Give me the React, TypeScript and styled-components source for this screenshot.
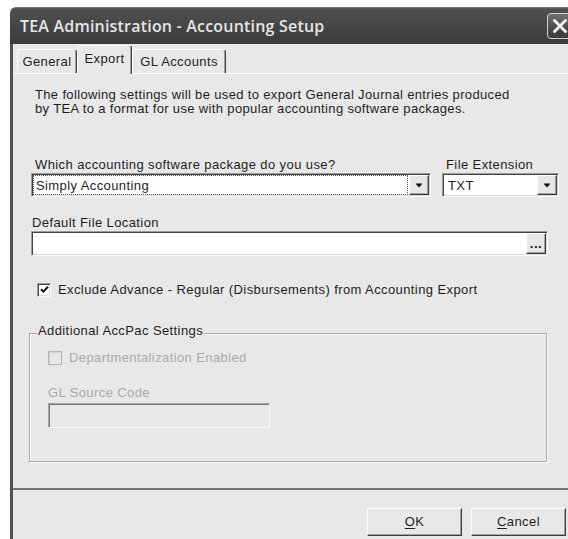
import React from 'react';
import styled, { createGlobalStyle, css } from 'styled-components';

const ui = `"Liberation Sans", Arial, sans-serif`;
const face = '#e8e8e8';
const ink = '#1e1e1e';
const grayInk = '#a9a9a9';

const GlobalStyle = createGlobalStyle`
  html, body {
    margin: 0;
    padding: 0;
    background: #ffffff;
    overflow: hidden;
  }
  body {
    width: 568px;
    height: 539px;
    font-family: ${ui};
  }
  *, *::before, *::after {
    box-sizing: border-box;
  }
`;

const sunken = css`
  border: 1px solid;
  border-color: #9c9c9c #fbfbfb #fbfbfb #9c9c9c;
  box-shadow: inset 1px 1px 0 #444444, inset -1px -1px 0 #dadada;
`;

const raised = css`
  border: 1px solid;
  border-color: #fdfdfd #3e3e3e #3e3e3e #fdfdfd;
  box-shadow: inset -1px -1px 0 #a2a2a2;
  background: ${face};
`;

const uiText = css`
  font-family: ${ui};
  font-size: 13px;
  line-height: 15px;
  letter-spacing: 0.4px;
`;

/* ---------- window chrome ---------- */

const Dialog = styled.div`
  margin: 7px 0 0 10px;
  width: 578px;
  height: 540px;
  display: flex;
  flex-direction: column;
`;

const TitleBar = styled.div`
  flex: none;
  height: 37px;
  display: flex;
  align-items: center;
  padding-left: 10px;
  border-radius: 6px 6px 0 0;
  background: linear-gradient(#767676 0, #505050 2px, #474747 45%, #3b3b3b 100%);
`;

const Title = styled.span`
  font-family: "Open Sans", "DejaVu Sans", sans-serif;
  font-size: 16px;
  font-weight: 600;
  letter-spacing: 0.2px;
  color: #e6e6e6;
  white-space: nowrap;
`;

const CloseButton = styled.div`
  margin-left: auto;
  margin-right: 15px;
  margin-top: 1px;
  width: 26px;
  height: 26px;
  border: 1px solid #cfcfcf;
  border-radius: 4px;
  background: linear-gradient(#707070, #4a4a4a 60%, #3e3e3e);
  display: flex;
  align-items: center;
  justify-content: center;
`;

const Frame = styled.div`
  flex: 1;
  display: flex;
  flex-direction: column;
  background: ${face};
  border-left: 3px solid #505050;
`;

/* ---------- tabs ---------- */

const TabStrip = styled.div`
  position: relative;
  z-index: 1;
  flex: none;
  height: 29px;
  display: flex;
  align-items: flex-end;
  padding-left: 4px;
`;

const Tab = styled.div<{ $active?: boolean; $w: number }>`
  ${uiText};
  width: ${(p) => p.$w}px;
  height: ${(p) => (p.$active ? 29 : 24)}px;
  margin-bottom: ${(p) => (p.$active ? -1 : 0)}px;
  padding-bottom: ${(p) => (p.$active ? 4 : 0)}px;
  display: flex;
  align-items: center;
  justify-content: center;
  color: ${ink};
  background: ${face};
  border: 1px solid;
  border-bottom: none;
  border-color: #fdfdfd #444444 transparent #fdfdfd;
  border-radius: 3px 3px 0 0;
  box-shadow: inset -1px 0 0 #a0a0a0;
`;

const Panel = styled.div`
  flex: none;
  height: 417px;
  border-top: 1px solid #fbfbfb;
  border-bottom: 2px solid #767676;
  padding: 14px 0 0 18px;
  display: flex;
  flex-direction: column;
  align-items: flex-start;
`;

/* ---------- panel content ---------- */

const Intro = styled.p`
  margin: 0 0 0 4px;
  font-family: ${ui};
  font-size: 13px;
  line-height: 14px;
  letter-spacing: 0.35px;
  color: ${ink};
  white-space: nowrap;
`;

const FieldLabel = styled.div<{ $indent?: number; $disabled?: boolean }>`
  ${uiText};
  padding-left: ${(p) => p.$indent ?? 0}px;
  color: ${(p) => (p.$disabled ? grayInk : ink)};
  white-space: nowrap;
`;

const ComboGrid = styled.div`
  margin-top: 41px;
  display: grid;
  grid-template-columns: 400px 117px;
  column-gap: 11px;
  row-gap: 1px;
`;

const Combo = styled.div`
  height: 24px;
  padding: 1px;
  display: flex;
  background: #ffffff;
  ${sunken};
`;

const ComboValue = styled.div<{ $focused?: boolean }>`
  ${uiText};
  flex: 1;
  display: flex;
  align-items: center;
  padding-left: ${(p) => (p.$focused ? 2 : 3)}px;
  margin-right: 1px;
  color: ${ink};
  border: 1px ${(p) => (p.$focused ? 'dotted #555555' : 'solid transparent')};
`;

const DropButton = styled.div`
  ${raised};
  width: 20px;
  display: flex;
  align-items: center;
  justify-content: center;
`;

const PathField = styled.div`
  margin-top: 1px;
  width: 517px;
  height: 25px;
  padding: 1px;
  display: flex;
  justify-content: flex-end;
  background: #ffffff;
  ${sunken};
`;

const BrowseButton = styled.div`
  ${raised};
  width: 20px;
  display: flex;
  align-items: flex-end;
  justify-content: center;
  padding-bottom: 5px;
  font-family: ${ui};
  font-size: 13px;
  font-weight: bold;
  line-height: 8px;
  letter-spacing: 0.5px;
  color: #111111;
`;

const CheckRow = styled.div<{ $disabled?: boolean; $top: number; $inset?: number }>`
  ${uiText};
  margin-top: ${(p) => p.$top}px;
  margin-left: ${(p) => p.$inset ?? 6}px;
  display: flex;
  align-items: center;
  gap: 7px;
  color: ${(p) => (p.$disabled ? grayInk : ink)};
  white-space: nowrap;
`;

const CheckBox = styled.span<{ $disabled?: boolean }>`
  width: 14px;
  height: 14px;
  display: flex;
  align-items: center;
  justify-content: center;
  ${(p) =>
    p.$disabled
      ? css`
          border: 1px solid #b4b4b4;
          box-shadow: inset 1px 1px 0 #d0d0d0;
          background: ${face};
        `
      : css`
          background: #ffffff;
          ${sunken};
        `}
`;

const Group = styled.section`
  position: relative;
  margin: 36px 0 0 -2px;
  width: 518px;
  padding: 16px 0 33px 18px;
  border: 1px solid #a8a8a8;
  box-shadow: 1px 1px 0 #fcfcfc, inset 1px 1px 0 #fcfcfc;
`;

const GroupCaption = styled.span`
  ${uiText};
  position: absolute;
  top: -11px;
  left: 7px;
  padding: 0 1px;
  background: ${face};
  color: ${ink};
  white-space: nowrap;
`;

const CodeField = styled.div`
  margin-top: 3px;
  width: 222px;
  height: 25px;
  border: 1px solid;
  border-color: #a6a6a6 #fbfbfb #fbfbfb #a6a6a6;
  box-shadow: inset 1px 1px 0 #7a7a7a;
  background: ${face};
`;

/* ---------- dialog buttons ---------- */

const ButtonRow = styled.div`
  flex: none;
  display: flex;
  justify-content: flex-end;
  gap: 9px;
  padding: 18px 22px 0 0;
`;

const PushButton = styled.button`
  ${raised};
  ${uiText};
  width: 95px;
  height: 28px;
  padding: 0 0 1px;
  color: ${ink};
  cursor: default;

  u {
    text-decoration-thickness: 1px;
    text-underline-offset: 2px;
  }
`;

/* ---------- glyphs ---------- */

const CloseGlyph = () => (
  <svg width="14" height="14" viewBox="0 0 14 14">
    <path d="M1.5 1.5 L12.5 12.5 M12.5 1.5 L1.5 12.5" stroke="#f4f4f4" strokeWidth="2.8" strokeLinecap="square" />
  </svg>
);

const DownArrow = () => (
  <svg width="8" height="5" viewBox="0 0 8 5">
    <path d="M0.5 0.5 H7.5 L4 4.5 Z" fill="#111111" />
  </svg>
);

const Tick = () => (
  <svg width="9" height="9" viewBox="0 0 9 9">
    <path d="M1 4.2 L3.4 6.6 L8 1.8" fill="none" stroke="#111111" strokeWidth="2" />
  </svg>
);

export default function App() {
  return (
    <>
      <GlobalStyle />
      <Dialog>
        <TitleBar>
          <Title>TEA Administration - Accounting Setup</Title>
          <CloseButton>
            <CloseGlyph />
          </CloseButton>
        </TitleBar>
        <Frame>
          <TabStrip>
            <Tab $w={60}>General</Tab>
            <Tab $w={55} $active>
              Export
            </Tab>
            <Tab $w={94}>GL Accounts</Tab>
          </TabStrip>
          <Panel>
            <Intro>
              The following settings will be used to export General Journal entries produced
              <br />
              by TEA to a format for use with popular accounting software packages.
            </Intro>

            <ComboGrid>
              <FieldLabel $indent={4}>Which accounting software package do you use?</FieldLabel>
              <FieldLabel $indent={4}>File Extension</FieldLabel>
              <Combo>
                <ComboValue $focused>Simply Accounting</ComboValue>
                <DropButton>
                  <DownArrow />
                </DropButton>
              </Combo>
              <Combo>
                <ComboValue>TXT</ComboValue>
                <DropButton>
                  <DownArrow />
                </DropButton>
              </Combo>
            </ComboGrid>

            <FieldLabel $indent={1} style={{ marginTop: 18 }}>
              Default File Location
            </FieldLabel>
            <PathField>
              <BrowseButton>...</BrowseButton>
            </PathField>

            <CheckRow $top={26}>
              <CheckBox>
                <Tick />
              </CheckBox>
              Exclude Advance - Regular (Disbursements) from Accounting Export
            </CheckRow>

            <Group>
              <GroupCaption>Additional AccPac Settings</GroupCaption>
              <CheckRow $top={0} $inset={0} $disabled>
                <CheckBox $disabled />
                Departmentalization Enabled
              </CheckRow>
              <FieldLabel $disabled style={{ marginTop: 20 }}>
                GL Source Code
              </FieldLabel>
              <CodeField />
            </Group>
          </Panel>
          <ButtonRow>
            <PushButton>
              <u>O</u>K
            </PushButton>
            <PushButton>
              <u>C</u>ancel
            </PushButton>
          </ButtonRow>
        </Frame>
      </Dialog>
    </>
  );
}
